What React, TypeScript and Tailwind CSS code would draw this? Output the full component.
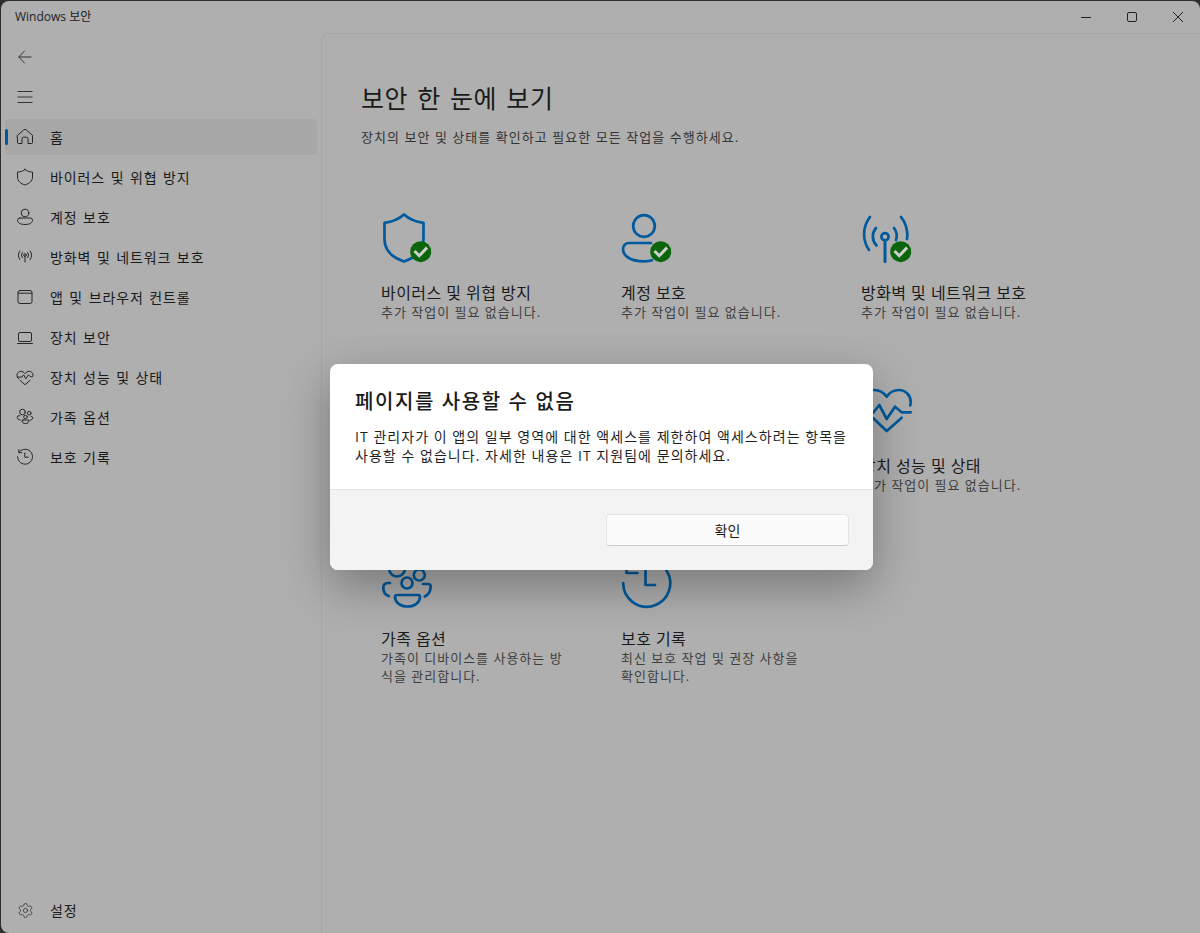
import React from "react";
import { Settings } from "lucide-react";

const FONT = "[font-family:'Open_Sans','Noto_Sans_CJK_KR',sans-serif]";

function Small({ children }: { children: React.ReactNode }) {
  return (
    <svg width="20" height="20" viewBox="0 0 20 20" fill="none" stroke="#262626" strokeWidth="1" strokeLinecap="round" strokeLinejoin="round" className="shrink-0">
      {children}
    </svg>
  );
}

const smallIcons: Record<string, React.ReactNode> = {
  home: <path d="M2.5 8.3 8.6 3a2.1 2.1 0 0 1 2.8 0l6.1 5.3v7.2a1 1 0 0 1-1 1H13v-4.7a1.6 1.6 0 0 0-1.6-1.6H8.6A1.6 1.6 0 0 0 7 11.8v4.7H3.5a1 1 0 0 1-1-1Z" />,
  shield: <path d="M10 2.5c2 1.7 4.5 2.5 7.5 2.5v5c0 4-3 6.5-7.5 8-4.5-1.5-7.5-4-7.5-8V5c3 0 5.500-.8 7.500-2.500Z" />,
  user: <><circle cx="10" cy="6" r="3.800" /><path d="M4.800 11h10.400a2.300 2.300 0 0 1 2.300 2.300c0 2.700-3.300 4.200-7.500 4.200s-7.500-1.500-7.500-4.200A2.300 2.300 0 0 1 4.800 11Z" /></>,
  wifi: <><circle cx="10" cy="8" r="1.300" /><path d="M10 9.300V15M7.300 5.500a4 4 0 0 0 0 5.200M12.700 5.500a4 4 0 0 1 0 5.200M4.800 4a7.500 7.500 0 0 0 0 8.500M15.200 4a7.500 7.500 0 0 1 0 8.500" /></>,
  window: <><rect x="3" y="3.500" width="14" height="13" rx="2" /><path d="M3 6.200h14" /></>,
  laptop: <><rect x="3.500" y="5.500" width="13" height="9" rx="1.500" /><path d="M2.500 16.500h15" /></>,
  heart: <><path d="M3.300 11.500C2.400 10.400 2 9.300 2 8.200 2 6 3.700 4.300 5.800 4.300c1.700 0 3.200.9 4.200 2.400 1-1.500 2.500-2.400 4.200-2.400C16.300 4.300 18 6 18 8.200c0 .5-.1 1-.3 1.500h-2.500l-1.800-1.900-2.500 4-2.300-4-1.700 2.300H2.300" /><path d="m4.800 13.200 5.200 4.500 5.200-4.500" /></>,
  family: <><circle cx="7.500" cy="5" r="2.800" /><circle cx="14.200" cy="6.200" r="1.800" /><circle cx="10.500" cy="10" r="1.800" /><path d="M4.800 8.700H4a1.800 1.800 0 0 0-1.800 1.800c0 1.300 1 2.300 3 2.500M16 9.300h.2a1.800 1.800 0 0 1 1.600 1.700c0 1.200-1 2-2.800 2.200M7.800 13h5.400c.5 0 .8.400.8.800 0 1.700-1.500 2.800-3.500 2.800S7 15.500 7 13.800c0-.4.300-.8.800-.8Z" /></>,
  history: <><path d="M4.300 4.800A7.500 7.500 0 1 1 2.500 9.700" /><path d="M3.800 2.700v3h3M9.800 6v4.200h3.500" /></>,
};

const navItems = [
  { icon: "home", label: "홈", active: true },
  { icon: "shield", label: "바이러스 및 위협 방지" },
  { icon: "user", label: "계정 보호" },
  { icon: "wifi", label: "방화벽 및 네트워크 보호" },
  { icon: "window", label: "앱 및 브라우저 컨트롤" },
  { icon: "laptop", label: "장치 보안" },
  { icon: "heart", label: "장치 성능 및 상태" },
  { icon: "family", label: "가족 옵션" },
  { icon: "history", label: "보호 기록" },
];

function Badge() {
  return (
    <g>
      <circle cx="39.700" cy="39.700" r="10.500" fill="#0b660b" stroke="none" />
      <path d="m34.500 40 3.800 3.700 6.700-7" fill="none" stroke="#cfcfcf" strokeWidth="3" strokeLinecap="square" strokeLinejoin="miter" />
    </g>
  );
}

function Big({ children, check = true }: { children: React.ReactNode; check?: boolean }) {
  return (
    <svg width="52" height="52" viewBox="0 0 52 52" fill="none" stroke="#005a9e" strokeWidth="2.700" strokeLinecap="round" strokeLinejoin="round" className="block">
      {children}
      {check && <Badge />}
    </svg>
  );
}

const bigIcons: Record<string, React.ReactNode> = {
  shield: <path d="M23 2.500C28 7 34 9.800 42.500 10.800V27C42.500 38 35 45.500 23 49.500 11 45.500 3.500 38 3.500 27V10.800C12 9.800 18 7 23 2.500Z" />,
  user: <><circle cx="23" cy="14" r="10.800" /><path d="M30 31H8a6 6 0 0 0-6 6c0 7.500 8.500 12.300 21 12.300 3 0 6-.3 8-1" /></>,
  wifi: <><circle cx="24" cy="24.700" r="3.600" /><path d="M24 28.300V49.500" strokeWidth="3" /><path d="M15 16a13 13 0 0 0 .5 17.500M33 16a13 13 0 0 1 2 12M9 5a28 28 0 0 0-1 33M40 5a28 28 0 0 1 6 14c.5 3 .5 6 0 8" /></>,
  heart: <><path d="M25.700 11.700C28 8 33 5 38 5c6.500 0 11.700 5.500 11.700 12 0 1.500 0 2.500-.5 3.500M25.700 11.700C23 8 18 5 13 5 6.500 5 1.700 10.500 1.700 17c0 3.500 1 7 3 10" /><path d="M1.700 28H12l6.300-8 7.400 14 8.300-12.300 6.700 5.600h9" /><path d="M12.300 33.300 25.700 46l15-13.300" /></>,
  family: <><circle cx="16" cy="10.500" r="8" /><circle cx="38.300" cy="17" r="5.500" /><circle cx="26" cy="25" r="5.500" /><path d="M9 25H7c-3 0-4.700 2-4.700 5 0 4 2.500 7 5.500 8M42 26h5c1.500 0 2.700 1 2.700 2.500 0 4-2 8-6 10" /><path d="M16 37H37c1 0 2 .8 2 2 0 5.500-5.500 9.500-12.500 9.500S14 44.500 14 39c0-1.200 1-2 2-2Z" /></>,
  history: <><path d="M7 11A23.500 23.500 0 1 1 2.200 25" /><path d="M5.500 4v11h11M24.500 12v15H34" /></>,
};

const cards = [
  { icon: "shield", title: "바이러스 및 위협 방지", desc: ["추가 작업이 필요 없습니다."], check: true },
  { icon: "user", title: "계정 보호", desc: ["추가 작업이 필요 없습니다."], check: true },
  { icon: "wifi", title: "방화벽 및 네트워크 보호", desc: ["추가 작업이 필요 없습니다."], check: true },
  null,
  null,
  { icon: "heart", title: "장치 성능 및 상태", desc: ["추가 작업이 필요 없습니다."], check: false },
  { icon: "family", title: "가족 옵션", desc: ["가족이 디바이스를 사용하는 방", "식을 관리합니다."], check: false },
  { icon: "history", title: "보호 기록", desc: ["최신 보호 작업 및 권장 사항을", "확인합니다."], check: false },
];

export default function App() {
  return (
    <div className={`relative h-[933px] w-[1200px] overflow-hidden bg-[#2e2e2e] pl-px pt-px ${FONT}`}>
      <div className="flex h-full flex-col rounded-tl-lg rounded-tr-lg rounded-bl-lg bg-[#afafaf] text-[#1a1a1a]">
        {/* Title bar */}
        <div className="flex h-[32px] shrink-0 items-center justify-between">
          <span className="pl-[14px] text-[12px] text-[#222222]">Windows 보안</span>
          <div className="flex items-center">
            <div className="flex h-[32px] w-[46px] items-center justify-center">
              <svg width="12" height="12" viewBox="0 0 12 12" stroke="#222" fill="none"><path d="M1 6.500h10" /></svg>
            </div>
            <div className="flex h-[32px] w-[46px] items-center justify-center">
              <svg width="12" height="12" viewBox="0 0 12 12" stroke="#222" fill="none"><rect x="1.500" y="1.500" width="9" height="9" rx="1.500" /></svg>
            </div>
            <div className="flex h-[32px] w-[45px] items-center justify-center">
              <svg width="12" height="12" viewBox="0 0 12 12" stroke="#222" fill="none"><path d="m1 1 10 10M11 1 1 11" /></svg>
            </div>
          </div>
        </div>
        <div className="flex min-h-0 flex-1">
          {/* Sidebar */}
          <aside className="flex w-[320px] shrink-0 flex-col pb-[3px] pt-[4px]">
            <div className="flex h-[40px] shrink-0 items-center pl-[14px]">
              <svg width="20" height="20" viewBox="0 0 20 20" fill="none" stroke="#333" strokeWidth="1" strokeLinecap="round" strokeLinejoin="round"><path d="M4 10h12M9.500 4 3.800 10l5.700 6" /></svg>
            </div>
            <div className="flex h-[40px] shrink-0 items-center pl-[14px]">
              <svg width="20" height="20" viewBox="0 0 20 20" fill="none" stroke="#333" strokeWidth="1"><path d="M2.500 4.500h15M2.500 10h15M2.500 15.500h15" /></svg>
            </div>
            <nav className="flex flex-col">
              {navItems.map((item) => (
                <div key={item.label} className={`relative mx-[4px] my-[2px] flex h-[36px] items-center rounded-[4px] pr-[4px] ${item.active ? "bg-[#a7a7a7]" : ""}`}>
                  {item.active && <span className="absolute left-0 top-[10px] h-[16px] w-[3px] rounded-full bg-[#00589a]" />}
                  <span className="pl-[10px]"><Small>{smallIcons[item.icon]}</Small></span>
                  <span className="pl-[15px] pt-[1px] text-[14px] tracking-[0.9px] [word-spacing:1px]">{item.label}</span>
                </div>
              ))}
            </nav>
            <div className="mt-auto flex h-[40px] items-center pl-[14px]">
              <span className="flex w-[20px] justify-center"><Settings size={17} strokeWidth={1} color="#262626" /></span>
              <span className="pl-[15px] text-[14px] tracking-[0.9px]">설정</span>
            </div>
          </aside>
          {/* Main */}
          <main className="min-w-0 flex-1 rounded-tl-lg border-l border-t border-[#a6a6a6] bg-[#afafaf] pl-[39px]">
            <h1 className="pt-[44px] text-[25px] font-normal leading-[40px] tracking-[0.6px] [word-spacing:2px]">보안 한 눈에 보기</h1>
            <p className="pt-[9px] text-[13px] leading-[20px] tracking-[1.05px] text-[#333333]">장치의 보안 및 상태를 확인하고 필요한 모든 작업을 수행하세요.</p>
            <div className="ml-[20px] mt-[65px] grid w-[720px] grid-cols-3 auto-rows-[173px]">
              {cards.map((c, i) =>
                c ? (
                  <div key={c.title}>
                    <Big check={c.check}>{bigIcons[c.icon]}</Big>
                    <div className="pt-[19px] text-[16px] leading-[20px] tracking-[0.45px]">{c.title}</div>
                    <div className="text-[13px] leading-[18px] tracking-[1px] text-[#3f3f3f]">
                      {c.desc.map((d) => <div key={d}>{d}</div>)}
                    </div>
                  </div>
                ) : (
                  <div key={i} />
                )
              )}
            </div>
          </main>
        </div>
      </div>
      {/* Dialog */}
      <div className="absolute left-[330px] top-[364px] flex h-[206px] w-[543px] flex-col overflow-hidden rounded-lg bg-white shadow-[0_16px_48px_rgba(0,0,0,0.32)]">
        <div className="h-[126px] shrink-0 border-b border-[#e5e5e5] px-[25px]">
          <h2 className="pt-[22px] text-[20px] font-medium leading-[32px] tracking-[1.6px] text-[#1a1a1a]">페이지를 사용할 수 없음</h2>
          <p className="pt-[9px] text-[14px] leading-[19px] tracking-[1.04px] text-[#1f1f1f]">
            IT 관리자가 이 앱의 일부 영역에 대한 액세스를 제한하여 액세스하려는 항목을<br />사용할 수 없습니다. 자세한 내용은 IT 지원팀에 문의하세요.
          </p>
        </div>
        <div className="flex flex-1 items-center justify-end bg-[#f3f3f3] px-[24px]">
          <button className="h-[32px] w-[243px] rounded-[4px] border border-[#e5e5e5] border-b-[#cccccc] bg-[#fbfbfb] text-[14px] text-[#1a1a1a]">확인</button>
        </div>
      </div>
    </div>
  );
}
